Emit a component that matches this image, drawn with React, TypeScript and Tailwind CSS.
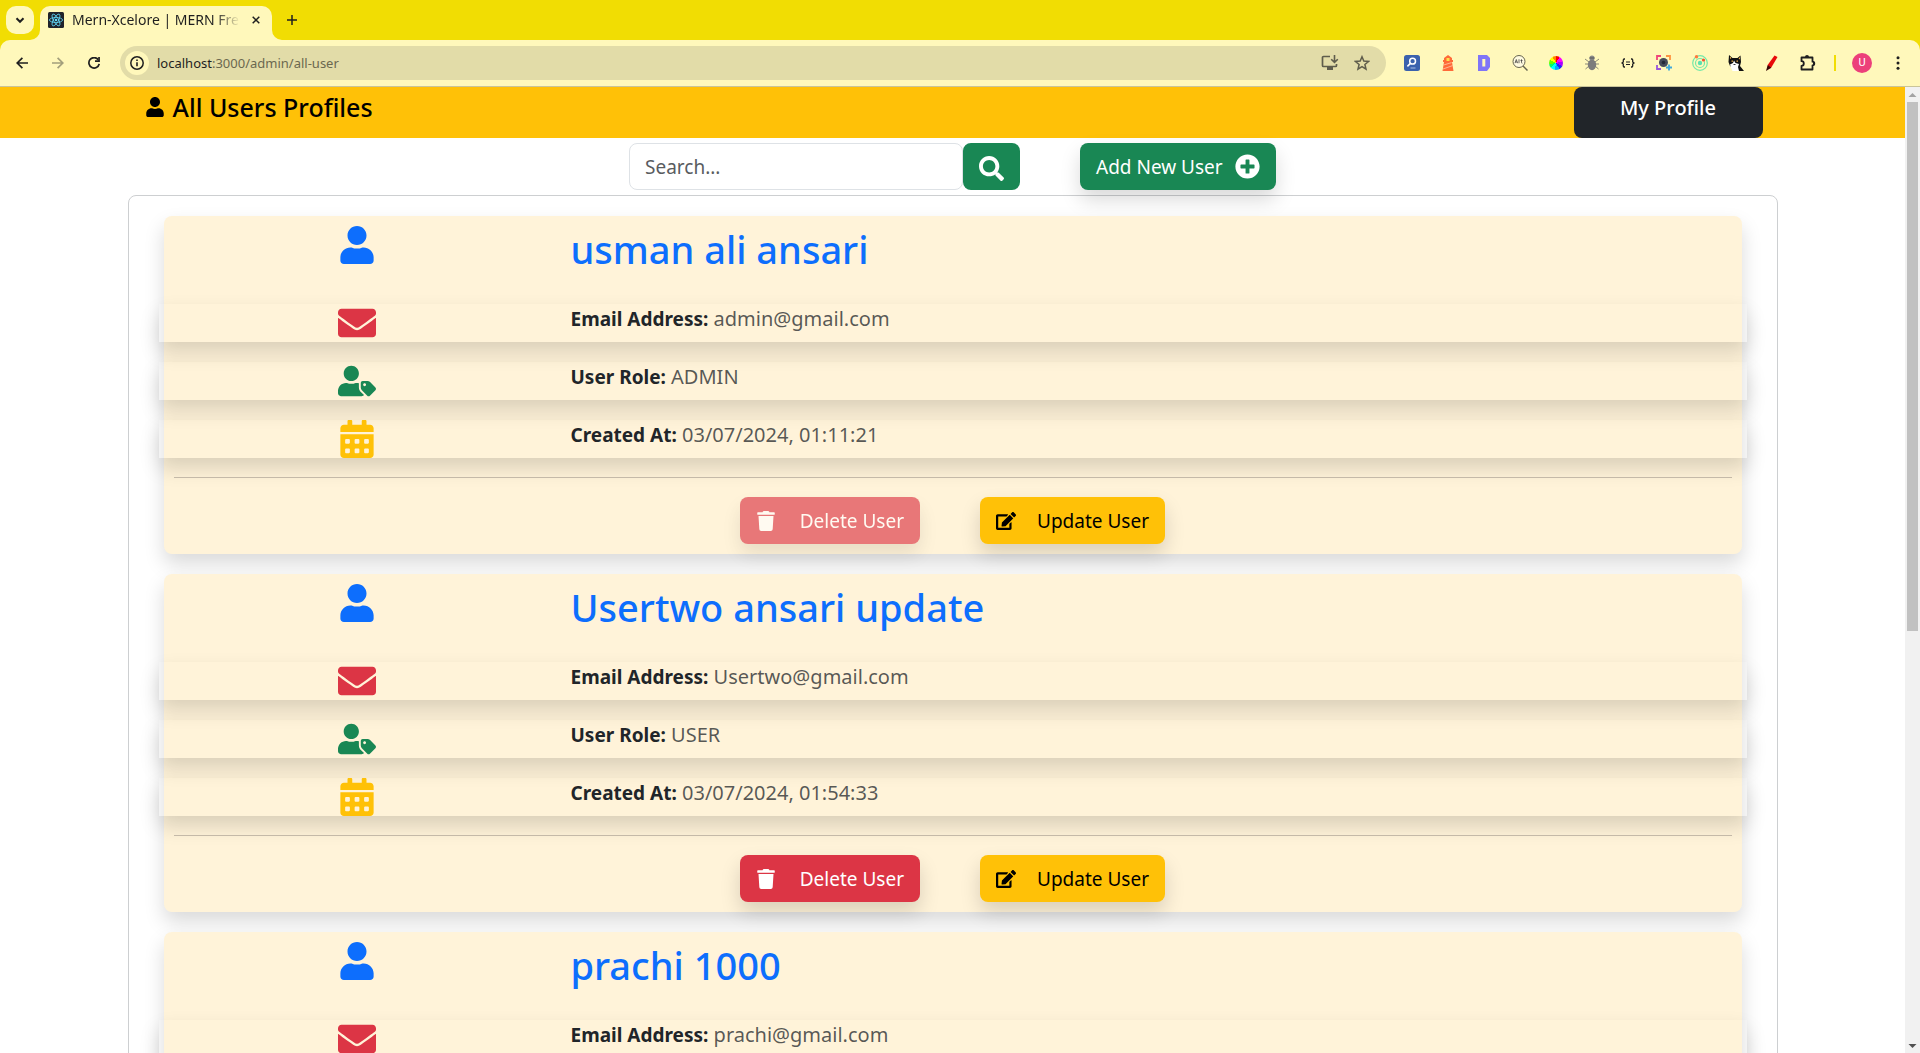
import React from "react";
import {
  FaUser,
  FaEnvelope,
  FaUserTag,
  FaCalendarAlt,
  FaTrash,
  FaEdit,
  FaSearch,
  FaPlusCircle,
} from "react-icons/fa";

type User = { name: string; email: string; role: string; created: string; locked?: boolean };

const users: User[] = [
  { name: "usman ali ansari", email: "admin@gmail.com", role: "ADMIN", created: "03/07/2024, 01:11:21", locked: true },
  { name: "Usertwo ansari update", email: "Usertwo@gmail.com", role: "USER", created: "03/07/2024, 01:54:33" },
  { name: "prachi 1000", email: "prachi@gmail.com", role: "USER", created: "03/07/2024, 02:10:45" },
];

function ToolButton({ label, children }: { label: string; children: React.ReactNode }) {
  return (
    <button type="button" aria-label={label} className="flex h-9 w-9 shrink-0 items-center justify-center">
      {children}
    </button>
  );
}

const line = { fill: "none", stroke: "currentColor", strokeWidth: 2 } as const;

function ReactLogo() {
  return (
    <svg viewBox="0 0 16 16" className="h-4 w-4 shrink-0">
      <rect width="16" height="16" rx="1.5" fill="#20232a" />
      <g fill="none" stroke="#61dafb" strokeWidth="0.8">
        <ellipse cx="8" cy="8" rx="6.6" ry="2.5" />
        <ellipse cx="8" cy="8" rx="6.6" ry="2.5" transform="rotate(60 8 8)" />
        <ellipse cx="8" cy="8" rx="6.6" ry="2.5" transform="rotate(120 8 8)" />
      </g>
      <circle cx="8" cy="8" r="1.3" fill="#61dafb" />
    </svg>
  );
}

function TabStrip() {
  return (
    <div className="flex h-10 items-end bg-[#f1dd03]">
      <button
        type="button"
        aria-label="Search tabs"
        className="mb-1.5 ml-1.5 flex h-7 w-7 items-center justify-center rounded-[10px] bg-[#fff8bb]"
      >
        <svg viewBox="0 0 10 10" className="h-2.5 w-2.5 text-[#1f1f1f]">
          <path d="M1.5 3.2 5 6.8 8.5 3.2" {...line} />
        </svg>
      </button>
      <svg viewBox="0 0 10 10" className="-ml-1 h-2.5 w-2.5 text-[#fff8bb]">
        <path d="M10 0v10H0A10 10 0 0 0 10 0Z" fill="currentColor" />
      </svg>
      <div className="flex h-[34px] w-58 items-center rounded-t-[10px] bg-[#fff8bb] pb-1.5 pl-2">
        <ReactLogo />
        <span className="ml-2 w-42 overflow-hidden whitespace-nowrap bg-linear-to-r from-[#1f1f1f] from-85% to-transparent bg-clip-text font-['Noto_Sans'] text-[14px] leading-5 text-transparent">
          Mern-Xcelore | MERN Fre
        </span>
        <button type="button" aria-label="Close tab" className="ml-3 text-[#1f1f1f]">
          <svg viewBox="0 0 8 8" className="h-2 w-2">
            <path d="m.7.7 6.6 6.6M7.3.7.7 7.3" {...line} strokeWidth="1.5" />
          </svg>
        </button>
      </div>
      <svg viewBox="0 0 10 10" className="h-2.5 w-2.5 text-[#fff8bb]">
        <path d="M0 0v10h10A10 10 0 0 1 0 0Z" fill="currentColor" />
      </svg>
      <button type="button" aria-label="New tab" className="mb-[15px] ml-[5px] text-[#1f1f1f]">
        <svg viewBox="0 0 10 10" className="h-2.5 w-2.5">
          <path d="M5 0v10M0 5h10" {...line} strokeWidth="1.5" />
        </svg>
      </button>
    </div>
  );
}

function Toolbar() {
  return (
    <div className="bg-[#f1dd03]">
      <div className="flex h-[47px] items-center rounded-t-[10px] border-b border-[#c9c49a] bg-[#fff8bb] px-1 text-[#1f1f1f]">
        <ToolButton label="Back">
          <svg viewBox="0 0 12 12" className="h-3 w-3">
            <path d="M12 6H1.6M6.4.8 1.2 6l5.2 5.2" {...line} strokeWidth="1.7" />
          </svg>
        </ToolButton>
        <ToolButton label="Forward">
          <svg viewBox="0 0 12 12" className="h-3 w-3 text-[#a39f7c]">
            <path d="M0 6h10.4M5.6.8 10.8 6l-5.2 5.2" {...line} strokeWidth="1.7" />
          </svg>
        </ToolButton>
        <ToolButton label="Reload">
          <svg viewBox="0 0 12 12" className="h-3 w-3">
            <path d="M10.2 2.6A5.2 5.2 0 1 0 11.2 6.9" {...line} strokeWidth="1.7" />
            <path d="M11.9 0v4.9H7V3.2h3.2V0Z" fill="currentColor" />
          </svg>
        </ToolButton>
        <div className="ml-2 mr-2 flex h-[34px] flex-1 items-center rounded-full bg-[#e2dca8] pl-[5px] pr-2">
          <button
            type="button"
            aria-label="Site information"
            className="flex h-6 w-6 items-center justify-center rounded-full bg-[#fff8bb]"
          >
            <svg viewBox="0 0 14 14" className="h-3.5 w-3.5">
              <circle cx="7" cy="7" r="6.2" {...line} strokeWidth="1.5" />
              <path d="M7 6.2v4M7 3.4v1.5" {...line} strokeWidth="1.6" />
            </svg>
          </button>
          <span className="ml-2 flex-1 font-['Noto_Sans'] text-[13px] leading-5 text-[#6b684f]">
            <span className="text-[#1f1f1f]">localhost</span>:3000/admin/all-user
          </span>
          <button type="button" aria-label="Install app" className="flex h-8 w-8 items-center justify-center text-[#5f5d4c]">
            <svg viewBox="0 0 18 16" className="h-4 w-[18px]">
              <path d="M9 1.5H2.5a1 1 0 0 0-1 1v8a1 1 0 0 0 1 1h12a1 1 0 0 0 1-1V9" {...line} strokeWidth="1.7" />
              <path d="M6 12h6v3H6Z" fill="currentColor" />
              <path d="M13.5 0v7M10.2 4.2l3.3 3.2 3.3-3.2" {...line} strokeWidth="1.6" />
            </svg>
          </button>
          <button type="button" aria-label="Bookmark" className="flex h-8 w-8 items-center justify-center text-[#5f5d4c]">
            <svg viewBox="0 0 16 16" className="h-4 w-4">
              <path d="m8 1.8 1.8 4.3 4.7.4-3.6 3 1.1 4.6L8 11.6l-4 2.5 1.1-4.6-3.6-3 4.7-.4Z" {...line} strokeWidth="1.5" />
            </svg>
          </button>
        </div>
        <ToolButton label="Page lookup">
          <svg viewBox="0 0 16 16" className="h-4 w-4">
            <rect width="16" height="16" rx="2.5" fill="#3b62ad" />
            <circle cx="8.6" cy="6.2" r="2.9" fill="none" stroke="#fff" strokeWidth="1.5" />
            <path d="M6.4 8.4 3.4 11.4" stroke="#fff" strokeWidth="1.5" />
            <path d="M6.5 13h5" stroke="#a9bde2" strokeWidth="1" />
          </svg>
        </ToolButton>
        <ToolButton label="Lighthouse">
          <svg viewBox="0 0 16 16" className="h-4 w-4">
            <path d="M8 0 12 3v2h1v2h-1l1.5 9h-11L4 7H3V5h1V3Z" fill="#ff6a39" />
            <path d="M6.5 3h3v3h-3Z" fill="#ffe04a" />
            <path d="m3.6 10 8-2.4M3 14l9.6-3.4" stroke="#ffc8a8" strokeWidth="0.8" />
          </svg>
        </ToolButton>
        <ToolButton label="Dashboard">
          <svg viewBox="0 0 16 16" className="h-4 w-4">
            <path d="M2 0h9l3 3v9l-3 4H2Z" fill="#7f75f7" />
            <path d="M6.3 4h3v7.5h-3Z" fill="#fff8bb" />
          </svg>
        </ToolButton>
        <ToolButton label="Alt text viewer">
          <svg viewBox="0 0 16 16" className="h-4 w-4">
            <circle cx="7" cy="6.5" r="6" fill="#fffbe0" stroke="#66644f" />
            <path d="m11 11 4.5 4.5" stroke="#66644f" strokeWidth="1.5" />
            <path
              d="M3 8.200 4.300 4.500 5.600 8.200M3.500 7h1.700M7 4.300v3.900M9.500 4.300v3.300q0 .6.900.600M8.500 5.500h2"
              fill="none"
              stroke="#444"
              strokeWidth="0.8"
            />
          </svg>
        </ToolButton>
        <ToolButton label="Colour picker">
          <span className="h-3.5 w-3.5 rounded-full bg-[conic-gradient(#f00_0_30deg,#f0f_0_75deg,#a0f_0_115deg,#22f_0_150deg,#0af_0_190deg,#0ff_0_225deg,#0f6_0_260deg,#6f0_0_295deg,#ff0_0_330deg,#f80_0)]" />
        </ToolButton>
        <ToolButton label="Bug report">
          <svg viewBox="0 0 16 16" className="h-4 w-4">
            <path d="m1 4 4 3M15 4l-4 3M1 9h14M1.500 14 5 11M14.500 14 11 11" stroke="#8b8978" />
            <circle cx="8" cy="3" r="2.600" fill="#8a8a8a" />
            <ellipse cx="8" cy="9.800" rx="4.200" ry="5.400" fill="#7c7c7c" />
            <path d="M5.500 3h5" stroke="#555" />
          </svg>
        </ToolButton>
        <ToolButton label="JSON viewer">
          <svg viewBox="0 0 14 10" className="h-2.5 w-3.5">
            <path d="M4 1H3L2.300 2v2L1 5l1.300 1v2L3 9h1M10 1h1l.7 1v2L13 5l-1.300 1v2L11 9h-1" {...line} strokeWidth="1.300" />
            <path d="M5 4h4M5 6.500h4" stroke="currentColor" strokeWidth="1.200" />
          </svg>
        </ToolButton>
        <ToolButton label="Screenshot">
          <svg viewBox="0 0 16 16" className="h-4 w-4">
            <g fill="none" strokeWidth="1.800">
              <path d="M1 5V1h4" stroke="#f0457a" />
              <path d="M10 1h4v4" stroke="#ff9440" />
              <path d="M1 10v4h4" stroke="#9a55dc" />
              <path d="M13 9.500v6M10 12.500h6" stroke="#3fa8dc" />
            </g>
            <circle cx="7.500" cy="7.500" r="4.500" fill="#454b5b" />
            <circle cx="7.500" cy="7.500" r="1.800" fill="#232938" />
          </svg>
        </ToolButton>
        <ToolButton label="Orbit">
          <svg viewBox="0 0 16 16" className="h-4 w-4">
            <g fill="none" stroke="#74e8a8" strokeWidth="1.200">
              <circle cx="8" cy="8" r="7.300" />
              <circle cx="8" cy="8" r="4.500" />
            </g>
            <circle cx="8" cy="8" r="2.200" fill="#5ce0b0" />
            <circle cx="4.500" cy="1.800" r="1.700" fill="#ff7a3c" />
            <circle cx="11.500" cy="5" r="1.600" fill="#f5532d" />
          </svg>
        </ToolButton>
        <ToolButton label="Cat">
          <svg viewBox="0 0 16 16" className="h-4 w-4">
            <path d="m1 0 3.500 3h5L12.500.5l.5 6.500-1 4 4 5H11l-5-3-4-2L.500 7Z" fill="#111" />
            <path d="M2 9.500 5 8l1-2.500L7.500 8l3.500 1-1 3 1 4H4.500L3 12.500Z" fill="#fff" />
            <path d="M5.500 9h2v1h-2Z" fill="#333" />
            <path d="M2 1.500 3.500 3 2 4ZM12 2l-1.500 1.500L12 4.500Z" fill="#efb04c" />
            <path d="M3.500 5.500h1.500v1.200H3.500ZM8.500 5.500H10v1.200H8.500Z" fill="#efb04c" />
          </svg>
        </ToolButton>
        <ToolButton label="Marker">
          <svg viewBox="0 0 16 16" className="h-4 w-4">
            <path d="m10.500.5 3 1.500-6.500 11L3.500 14l.5-4.500Z" fill="#e80a0a" />
            <path d="m3.700 10 3.500 2.800L2 16Z" fill="#3a0505" />
          </svg>
        </ToolButton>
        <ToolButton label="Extensions">
          <svg viewBox="0 0 18 18" className="h-[18px] w-[18px]">
            <path d="M2.500 3.500h11v4.200a1.800 1.800 0 0 1 0 3.600v4.200h-11v-3.700a2.300 2.300 0 0 0 0-4.600Z" {...line} strokeWidth="1.800" strokeLinejoin="round" />
            <path d="M6 3a2 2 0 0 1 4 0ZM14 7.500a2 2 0 0 1 0 4Z" fill="currentColor" />
          </svg>
        </ToolButton>
        <span className="mx-2 h-4 w-0.5 bg-[#f1dd03]" />
        <ToolButton label="Account">
          <span className="flex h-5 w-5 items-center justify-center rounded-full bg-[#ec407a] font-['Roboto'] text-[11px] leading-5 text-white">
            U
          </span>
        </ToolButton>
        <ToolButton label="Menu">
          <svg viewBox="0 0 4 14" className="h-3.5 w-1" fill="currentColor">
            <circle cx="2" cy="1.700" r="1.500" />
            <circle cx="2" cy="7" r="1.500" />
            <circle cx="2" cy="12.300" r="1.500" />
          </svg>
        </ToolButton>
      </div>
    </div>
  );
}

function InfoRow({ icon, label, value }: { icon: React.ReactNode; label: string; value: string }) {
  return (
    <div className="-mx-[15px] mb-5 grid grid-cols-4 shadow-[0_10px_20px_rgba(0,0,0,0.15)]">
      <div className="flex justify-center">{icon}</div>
      <p className="col-span-3 px-[15px] leading-[30px] text-[#212529]/75">
        <strong className="text-[19px] font-bold text-[#212529]">{label}</strong> {value}
      </p>
    </div>
  );
}

const buttonStyle =
  "flex h-[47px] items-center rounded-lg px-4 text-[19px] leading-[30px] shadow-[0_10px_20px_rgba(0,0,0,0.15)]";

function UserCard({ user }: { user: User }) {
  return (
    <article className="rounded-lg bg-[#fff3d9] p-2.5 shadow-[0_10px_20px_rgba(0,0,0,0.15)]">
      <div className="-mx-[15px] mb-[30px] grid grid-cols-4">
        <div className="flex justify-center">
          <FaUser className="h-[38px] w-[38px] text-[#0d6efd]" />
        </div>
        <h2 className="col-span-3 px-[15px] pb-0.5 text-[38px] font-medium leading-[46px] text-[#0d6efd]">{user.name}</h2>
      </div>
      <InfoRow icon={<FaEnvelope className="h-[38px] w-[38px] text-[#dc3545]" />} label="Email Address:" value={user.email} />
      <InfoRow icon={<FaUserTag className="h-[38px] w-[38px] text-[#198754]" />} label="User Role:" value={user.role} />
      <InfoRow icon={<FaCalendarAlt className="h-[38px] w-[38px] text-[#ffc107]" />} label="Created At:" value={user.created} />
      <hr className="-mt-px mb-[19px] border-t border-[#c4b9a8]" />
      <div className="flex justify-center gap-15">
        <button
          type="button"
          disabled={user.locked}
          className={`${buttonStyle} w-45 justify-between bg-[#dc3545] text-white disabled:opacity-65`}
        >
          <FaTrash className="h-5 w-5" />
          Delete User
        </button>
        <button type="button" className={`${buttonStyle} w-[185px] justify-between bg-[#ffc107] text-black`}>
          <FaEdit className="h-5 w-5" />
          Update User
        </button>
      </div>
    </article>
  );
}

function Scrollbar() {
  return (
    <div className="flex w-[15px] shrink-0 flex-col items-center bg-[#f1f1f1]" aria-hidden="true">
      <svg viewBox="0 0 15 15" className="h-[15px] w-[15px]">
        <path d="m7.500 6 4 4h-8Z" fill="#a3a3a3" />
      </svg>
      <div className="min-h-0 w-full flex-1 px-0.5">
        <div className="h-[56.500%] bg-[#c1c1c1]" />
      </div>
      <svg viewBox="0 0 15 15" className="h-[15px] w-[15px]">
        <path d="m7.500 10 4-4h-8Z" fill="#505050" />
      </svg>
    </div>
  );
}

export default function App() {
  return (
    <div className="flex h-screen flex-col overflow-hidden bg-white font-['Noto_Sans',sans-serif] text-[20px]">
      <TabStrip />
      <Toolbar />
      <div className="flex min-h-0 flex-1">
        <main className="min-w-0 flex-1 overflow-hidden">
          <header className="bg-[#ffc107]">
            <div className="mx-auto flex max-w-[1650px] items-start justify-between px-[15px]">
              <h1 className="flex items-center gap-2 pl-0.5 text-[25px] font-medium leading-10 text-black">
                <FaUser className="h-5 w-5" />
                All Users Profiles
              </h1>
              <a
                href="#profile"
                className="flex h-[51px] w-[189px] justify-center rounded-lg bg-[#212529] pt-1.5 font-medium leading-[30px] text-white"
              >
                My Profile
              </a>
            </div>
          </header>
          <div className="flex justify-center gap-15 py-[5px]">
            <form className="flex" role="search">
              <input
                type="text"
                aria-label="Search users"
                placeholder="Search..."
                className="h-[47px] w-[334px] rounded-lg border border-[#dee2e6] px-[15px] text-[19px] placeholder:text-[#595c5f]"
              />
              <button
                type="button"
                aria-label="Search"
                className="flex h-[47px] w-[57px] items-center justify-center rounded-lg bg-[#198754] pt-1 text-white"
              >
                <FaSearch className="h-[25px] w-[25px]" />
              </button>
            </form>
            <button type="button" className={`${buttonStyle} w-49 justify-between bg-[#198754] text-white`}>
              Add New User
              <FaPlusCircle className="h-[25px] w-[25px]" />
            </button>
          </div>
          <section className="mx-auto flex max-w-[1650px] flex-col gap-5 rounded-lg border border-[#cdcfd1] px-[35px] pt-5 pb-5">
            {users.map((user) => (
              <UserCard key={user.email} user={user} />
            ))}
          </section>
        </main>
        <Scrollbar />
      </div>
    </div>
  );
}
